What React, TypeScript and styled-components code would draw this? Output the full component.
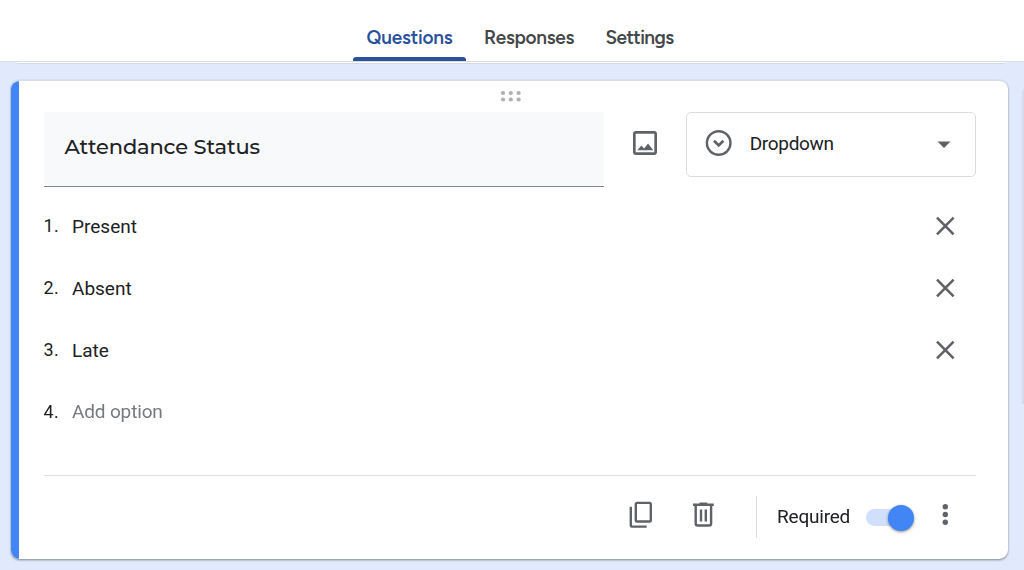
import React from "react";
import styled, { createGlobalStyle } from "styled-components";

const Global = createGlobalStyle`
  * { box-sizing: border-box; }
  html, body { margin: 0; padding: 0; background: #e1e9fc; overflow: hidden; }
  body { font-family: Roboto, "Liberation Sans", sans-serif; color: #202124; }
`;

const Page = styled.div`
  position: relative;
  height: 570px;
  overflow: hidden;
  background: #e1e9fc;
`;

const Tabs = styled.nav`
  display: flex;
  height: 62px;
  padding-left: 353px;
  background: #fff;
  border-bottom: 1px solid #dadce0;
`;

const Tab = styled.div<{ $active?: boolean; $width: number; $spacing: number }>`
  display: flex;
  flex-direction: column;
  align-items: center;
  justify-content: space-between;
  width: ${(p) => p.$width}px;
  padding-top: 26px;
  font: 600 19px/24px "Google Sans", "Product Sans", Figtree, Inter, sans-serif;
  letter-spacing: ${(p) => p.$spacing}px;
  white-space: nowrap;
  color: ${(p) => (p.$active ? "#2b509c" : "#444749")};
`;

const Indicator = styled.div`
  width: 100%;
  height: 4px;
  border-radius: 3px 3px 0 0;
  background: #2b509c;
`;

const PreviousCard = styled.div`
  height: 2px;
  margin: 0 18px 16px 16px;
  background: #fff;
  border-bottom: 1px solid #d5d9e2;
  border-radius: 0 0 6px 6px;
`;

const Card = styled.section`
  display: flex;
  width: 997px;
  height: 479px;
  margin-left: 11px;
  overflow: hidden;
  background: #fff;
  border-radius: 9px;
  border-top: 1px solid #d9dde5;
`;

const CardShadow = styled.div`
  width: 1008px;
  filter: drop-shadow(0 1px 1px rgba(60, 64, 67, 0.6));
`;

const Stripe = styled.div`
  width: 8px;
  height: 480px;
  margin-top: -1px;
  flex: none;
  background: #4285f4;
`;

const Content = styled.div`
  display: flex;
  flex-direction: column;
  width: 957px;
  padding-left: 24.5px;
`;

const DragHandle = styled.div`
  display: flex;
  height: 31px;
  padding: 10px 0 0 456px;
`;

const QuestionRow = styled.div`
  display: flex;
  height: 83px;
`;

const QuestionField = styled.div`
  display: flex;
  align-items: center;
  width: 560.5px;
  height: 75px;
  padding: 0 0 4px 21px;
  font: 500 21px/28px Montserrat, Inter, sans-serif;
  letter-spacing: -0.15px;
  background: #f8f9fa;
  border-bottom: 1px solid #80868b;
`;

const ImageButton = styled.div`
  width: 82.5px;
  padding: 15px 0 0 25px;
`;

const TypeSelect = styled.div`
  display: flex;
  align-items: center;
  width: 290px;
  height: 65px;
  padding: 0 25px 2px 18px;
  border: 1px solid #dadce0;
  border-radius: 5px;
`;

const TypeName = styled.span`
  flex: 1;
  padding-left: 16.5px;
  font-size: 19px;
  line-height: 24px;
  letter-spacing: -0.3px;
`;

const Option = styled.div`
  display: flex;
  align-items: center;
  height: 62px;
  padding-right: 21px;
`;

const OptionNumber = styled.span`
  width: 28.5px;
  font-size: 18px;
  line-height: 24px;
  letter-spacing: 0.3px;
`;

const OptionText = styled.span<{ $muted?: boolean }>`
  flex: 1;
  padding-top: ${(p) => (p.$muted ? 0 : 2)}px;
  font-size: 19px;
  line-height: 24px;
  letter-spacing: ${(p) => (p.$muted ? -0.15 : 0)}px;
  color: ${(p) => (p.$muted ? "#757a80" : "#202124")};
`;

const Footer = styled.footer`
  display: flex;
  align-items: flex-start;
  height: 84px;
  margin-top: 32px;
  padding: 20px 20px 0 584px;
  border-top: 1px solid #dfe0e5;
`;

const FooterIcon = styled.div<{ $width: number }>`
  width: ${(p) => p.$width}px;
  padding-top: 5px;
`;

const Separator = styled.div`
  width: 1px;
  height: 42px;
  background: #dadce0;
`;

const RequiredLabel = styled.span`
  width: 88px;
  margin-left: 20.5px;
  padding-top: 9px;
  font-size: 19px;
  line-height: 24px;
  letter-spacing: -0.2px;
`;

const Toggle = styled.div`
  display: flex;
  align-items: center;
  justify-content: flex-end;
  width: 47px;
  height: 17px;
  margin: 13px 0 0 1px;
  border-radius: 9px;
  background: linear-gradient(to right, #d0e0fc 40px, transparent 40px);
`;

const Thumb = styled.div`
  flex: none;
  width: 26px;
  height: 26px;
  margin-right: -1px;
  border-radius: 50%;
  background: #4285f4;
  box-shadow: 0 1px 3px rgba(0, 0, 0, 0.45);
`;

const MoreButton = styled.div`
  padding: 8px 0 0 28px;
`;

const SideToolbar = styled.div`
  position: absolute;
  top: 88px;
  right: -8px;
  width: 9px;
  height: 316px;
  border-radius: 4px;
  background: #d6dced;
  box-shadow: 0 1px 2px rgba(60, 64, 67, 0.25);
`;

const Icon = styled.svg`
  display: block;
  flex: none;
  overflow: visible;
`;

const options = ["Present", "Absent", "Late"];

export default function App() {
  return (
    <>
      <Global />
      <Page>
        <Tabs>
          <Tab $active $width={113} $spacing={-0.2}>
            Questions
            <Indicator />
          </Tab>
          <Tab $width={126} $spacing={-0.3}>Responses</Tab>
          <Tab $width={95} $spacing={-0.6}>Settings</Tab>
        </Tabs>
        <PreviousCard />
        <CardShadow>
          <Card>
            <Stripe />
            <Content>
              <DragHandle>
                <Icon width="22" height="12" fill="#b0b0b0">
                  {[3, 10.8, 18.6].map((x) => (
                    <React.Fragment key={x}>
                      <circle cx={x} cy="2" r="2.1" />
                      <circle cx={x} cy="8.5" r="2.1" />
                    </React.Fragment>
                  ))}
                </Icon>
              </DragHandle>
              <QuestionRow>
                <QuestionField>Attendance Status</QuestionField>
                <ImageButton>
                  <Icon width="32" height="32" viewBox="0 0 24 24" fill="#5f6368">
                    <path d="M19 5v14H5V5h14m0-2H5c-1.1 0-2 .9-2 2v14c0 1.1.9 2 2 2h14c1.1 0 2-.9 2-2V5c0-1.1-.9-2-2-2z" />
                    <path d="M14.3 12.4l-3 3.8-2.1-2.3-2.9 3.6h11.9z" />
                  </Icon>
                </ImageButton>
                <TypeSelect>
                  <Icon width="28" height="28" fill="none" stroke="#5f6368" strokeWidth="2.4">
                    <circle cx="13.7" cy="13" r="11.8" />
                    <path d="M9 10.8l4.7 4.6 4.7-4.6" strokeWidth="2.7" />
                  </Icon>
                  <TypeName>Dropdown</TypeName>
                  <Icon width="13" height="7" fill="#5f6368">
                    <path d="M.5 1.5h13L7 8z" />
                  </Icon>
                </TypeSelect>
              </QuestionRow>
              {options.map((label, i) => (
                <Option key={label}>
                  <OptionNumber>{i + 1}.</OptionNumber>
                  <OptionText>{label}</OptionText>
                  <Icon width="20" height="20" stroke="#5f6368" strokeWidth="2.6">
                    <path d="M2 1.7l16.6 16.6M18.6 1.7l-16.6 16.6" />
                  </Icon>
                </Option>
              ))}
              <Option>
                <OptionNumber>4.</OptionNumber>
                <OptionText $muted>Add option</OptionText>
              </Option>
              <Footer>
                <FooterIcon $width={64}>
                  <Icon width="26" height="28" fill="none" stroke="#5f6368" strokeWidth="2.4">
                    <rect x="7.8" y="1.9" width="15" height="18.6" rx="1.3" />
                    <path d="M2.8 5.8v18.1q0 1.7 1.7 1.7H18.7" />
                  </Icon>
                </FooterIcon>
                <FooterIcon $width={64}>
                  <Icon width="24" height="28" fill="none" stroke="#5f6368" strokeWidth="2.4">
                    <path d="M1 3.7h20.8M7.5 2.7h7.8M3.7 4v18.5q0 2 2 2h11.4q2 0 2-2V4M9 8.5v12M13.8 8.5v12" />
                  </Icon>
                </FooterIcon>
                <Separator />
                <RequiredLabel>Required</RequiredLabel>
                <Toggle>
                  <Thumb />
                </Toggle>
                <MoreButton>
                  <Icon width="8" height="24" fill="#5f6368">
                    <circle cx="4.3" cy="2.8" r="2.7" />
                    <circle cx="4.3" cy="10.5" r="2.7" />
                    <circle cx="4.3" cy="18.2" r="2.7" />
                  </Icon>
                </MoreButton>
              </Footer>
            </Content>
          </Card>
        </CardShadow>
        <SideToolbar />
      </Page>
    </>
  );
}
